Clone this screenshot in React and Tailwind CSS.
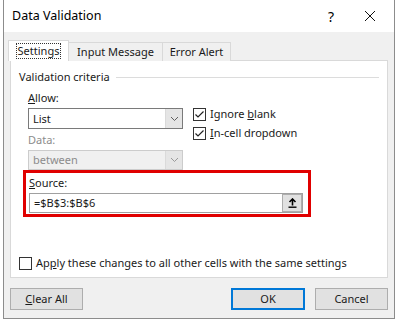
import React from 'react';

function Chevron({ color = '#606060' }) {
  return (
    <svg width="9" height="6" viewBox="0 0 9 6">
      <path d="M1 1 L4.5 4.5 L8 1" fill="none" stroke={color} strokeWidth="1" />
    </svg>
  );
}

function Check({ checked }) {
  return (
    <div className="w-[13px] h-[13px] border border-[#333] bg-white flex items-center justify-center">
      {checked && (
        <svg width="11" height="11" viewBox="0 0 11 11">
          <path d="M1.5 5.5 L4 8 L9.5 2.5" fill="none" stroke="#222" strokeWidth="1.2" />
        </svg>
      )}
    </div>
  );
}

function Btn({ children, primary, w = 'w-[73px]' }) {
  return (
    <div className={`${w} h-[22px] flex items-center justify-center bg-[#e1e1e1] ${primary ? 'border-2 border-[#0078d7]' : 'border border-[#adadad]'}`}>
      {children}
    </div>
  );
}

export default function App() {
  return (
    <div className="w-[401px] h-[320px] bg-white pl-[3px] text-[11px] text-[#1a1a1a]" style={{ fontFamily: '"Noto Sans", sans-serif' }}>
      <div className="w-[392px] h-[319px] border border-t-0 border-[#8c8c8c] flex flex-col">
        {/* title bar */}
        <div className="h-[32px] bg-white flex items-center pl-[8px] pr-[18px]">
          <span className="text-[12.5px] text-black">Data Validation</span>
          <span className="ml-auto text-[14px] text-black mr-[30px]">?</span>
          <svg width="12" height="12" viewBox="0 0 12 12">
            <path d="M1 1 L11 11 M11 1 L1 11" stroke="#111" strokeWidth="1" />
          </svg>
        </div>

        <div className="flex-1 bg-[#f0f0f0] px-[6px] flex flex-col">
          {/* tabs */}
          <div className="flex items-end mt-[8px] h-[21px] relative z-10 -mb-[1px]">
            <div className="w-[61px] h-[21px] bg-white border border-b-0 border-[#d9d9d9] -ml-[2px] flex items-center justify-center">
              <span className="outline-1 outline-dotted outline-[#333] px-[1px] leading-[14px]">Settings</span>
            </div>
            <div className="w-[94px] h-[19px] border border-l-0 border-b-0 border-[#d9d9d9] bg-[#f0f0f0] flex items-center justify-center">Input Message</div>
            <div className="w-[68px] h-[19px] border border-l-0 border-b-0 border-[#d9d9d9] bg-[#f0f0f0] flex items-center justify-center">Error Alert</div>
          </div>

          {/* panel */}
          <div className="w-[378px] h-[218px] bg-white border border-[#d9d9d9] flex flex-col">
            <div className="flex items-center mt-[8px] ml-[8px] h-[16px]">
              <span>Validation criteria</span>
              <div className="flex-1 h-px bg-[#dcdcdc] ml-[6px] mr-[8px]"></div>
            </div>

            <div className="flex ml-[17px] mt-[5px]">
              <div className="flex flex-col w-[155px]">
                <div className="h-[16px] leading-[16px]"><span className="underline">A</span>llow:</div>
                <div className="mt-[2px] h-[21px] border border-[#7a7a7a] flex">
                  <div className="flex-1 pl-[4px] leading-[19px]">List</div>
                  <div className="w-[17px] bg-[#e5e5e5] border-l border-[#dadada] flex items-center justify-center"><Chevron /></div>
                </div>
                <div className="h-[16px] leading-[16px] mt-[3px] text-[#8c8c8c]">Data:</div>
                <div className="mt-[2px] h-[20px] border border-[#cccccc] bg-[#f0f0f0] flex">
                  <div className="flex-1 pl-[4px] leading-[18px] text-[#8c8c8c]">between</div>
                  <div className="w-[17px] bg-[#e5e5e5] border-l border-[#dadada] flex items-center justify-center"><Chevron color="#999" /></div>
                </div>
              </div>
              <div className="flex flex-col ml-[10px] mt-[18px] gap-[6px]">
                <div className="flex items-center gap-[4px] h-[13px]"><Check checked /><span>Ignore <span className="underline">b</span>lank</span></div>
                <div className="flex items-center gap-[4px] h-[13px]"><Check checked /><span><span className="underline">I</span>n-cell dropdown</span></div>
              </div>
            </div>

            {/* source */}
            <div className="ml-[12px] w-[288px] h-[47px] border-[3px] border-[#e00000] pl-[3px] pr-[5px] pt-[2px]">
              <div className="h-[16px] leading-[16px]"><span className="underline">S</span>ource:</div>
              <div className="mt-[2px] h-[20px] border border-[#a0a0a0] flex items-center">
                <div className="flex-1 pl-[4px]">=$B$3:$B$6</div>
                <div className="w-[20px] h-[18px] bg-[#e1e1e1] border border-[#adadad] flex items-center justify-center">
                  <svg width="9" height="10" viewBox="0 0 9 10">
                    <path d="M4.5 1 L4.5 7.5 M1.5 4 L4.5 1 L7.5 4" fill="none" stroke="#000" strokeWidth="1.6" />
                    <path d="M0.5 9.2 L8.5 9.2" stroke="#000" strokeWidth="1.4" />
                  </svg>
                </div>
              </div>
            </div>

            <div className="flex items-center ml-[8px] mt-[38px] gap-[4px]">
              <Check />
              <span>Ap<span className="underline">p</span>ly these changes to all other cells with the same settings</span>
            </div>
          </div>

          {/* buttons */}
          <div className="flex items-center mt-[10px]">
            <Btn><span><span className="underline">C</span>lear All</span></Btn>
            <div className="flex-1"></div>
            <Btn primary w="w-[74px]">OK</Btn>
            <div className="w-[10px]"></div>
            <Btn>Cancel</Btn>
          </div>
        </div>
      </div>
    </div>
  );
}
